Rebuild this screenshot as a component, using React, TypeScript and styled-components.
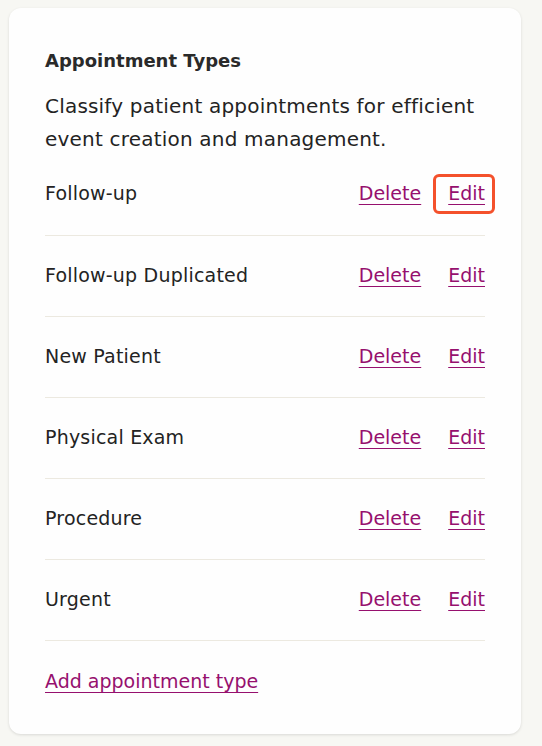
import { createGlobalStyle, styled } from "styled-components";

const types = [
  "Follow-up",
  "Follow-up Duplicated",
  "New Patient",
  "Physical Exam",
  "Procedure",
  "Urgent",
];

const GlobalStyle = createGlobalStyle`
  body {
    margin: 0;
    background: #f7f7f3;
    font-family: "DejaVu Sans", "Open Sans", sans-serif;
    color: #232323;
  }
`;

const App = () => {
  return (
    <Page>
      <GlobalStyle />
      <Card>
        <Title>Appointment Types</Title>
        <Description>
          Classify patient appointments for efficient event creation and
          management.
        </Description>
        <List>
          {types.map((name, i) => (
            <Row key={name}>
              <Name>{name}</Name>
              <Actions>
                <LinkButton>Delete</LinkButton>
                <LinkButton $focused={i === 0}>Edit</LinkButton>
              </Actions>
            </Row>
          ))}
        </List>
        <AddLink>Add appointment type</AddLink>
      </Card>
    </Page>
  );
};

const Page = styled.main`
  padding: 8px 21px 13px 9px;
`;

const Card = styled.section`
  background: #fefefe;
  border-radius: 12px;
  box-shadow: 0 1px 3px rgba(0, 0, 0, 0.12);
  padding: 40px 36px 42px;
  display: flex;
  flex-direction: column;
`;

const Title = styled.h1`
  margin: 0;
  font-size: 18px;
  font-weight: 700;
  line-height: 26px;
  color: #2a2a2a;
`;

const Description = styled.p`
  margin: 16px 0 0;
  font-size: 20px;
  line-height: 33px;
  letter-spacing: 0.2px;
`;

const List = styled.ul`
  list-style: none;
  margin: 0;
  padding: 0;
`;

const Row = styled.li`
  display: flex;
  align-items: center;
  justify-content: space-between;
  height: 81px;
  padding-bottom: 3px;
  box-sizing: border-box;
  border-bottom: 1px solid #ece9e0;

  &:first-child {
    height: 80px;
    padding-bottom: 6px;
  }
`;

const Name = styled.span`
  font-size: 19px;
  letter-spacing: 0.2px;
`;

const Actions = styled.div`
  display: flex;
  gap: 27px;
`;

const LinkButton = styled.a<{ $focused?: boolean }>`
  display: inline-block;
  padding: 5px 7px 7px 12px;
  margin: -5px -7px -7px -12px;
  line-height: 22px;
  color: #96106e;
  text-decoration: underline;
  text-decoration-thickness: 1px;
  text-underline-offset: 4px;
  font-size: 19px;
  cursor: pointer;
  outline: ${(p) => (p.$focused ? "3px solid #f4512c" : "none")};
  border-radius: 3px;
`;

const AddLink = styled(LinkButton)`
  margin-top: 24px;
  align-self: flex-start;
`;

export default App;
